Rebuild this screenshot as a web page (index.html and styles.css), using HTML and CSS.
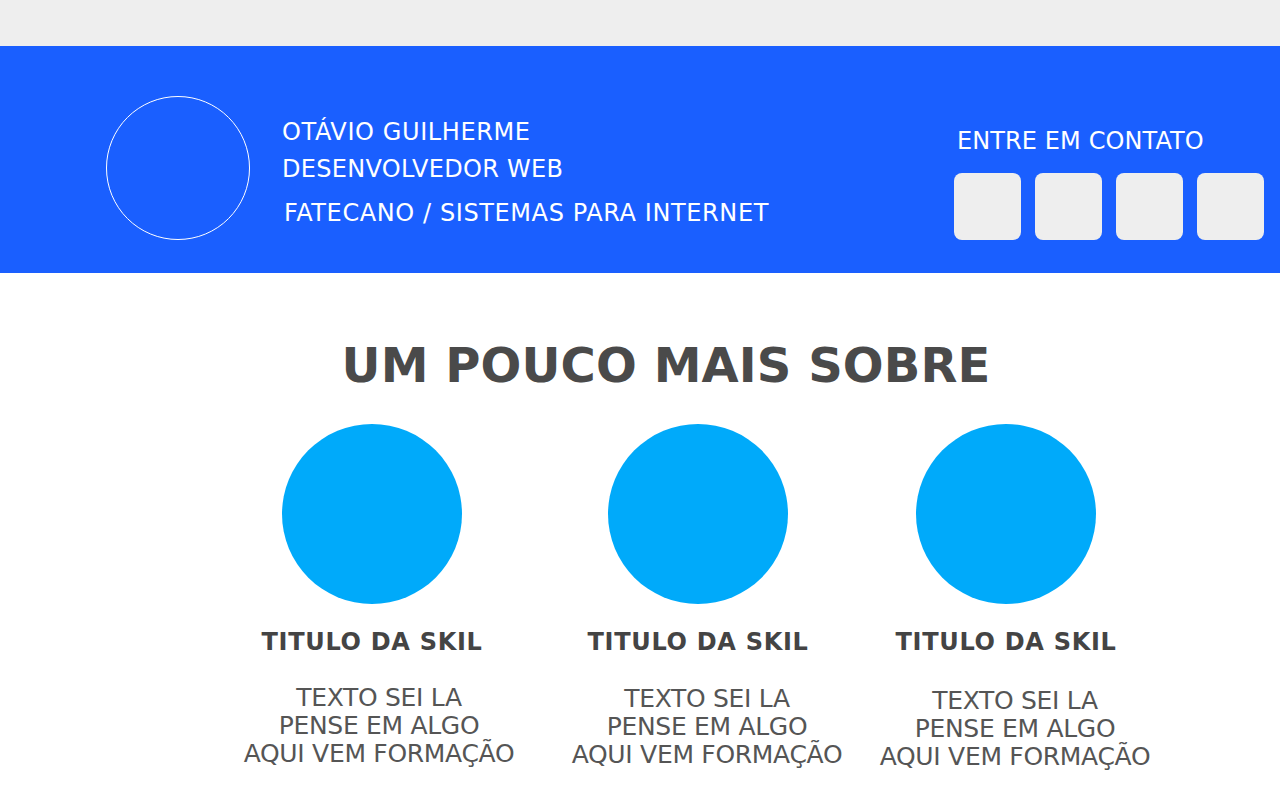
FILE: index.html
```html
<!DOCTYPE html>
<html lang="pt-BR">
<head>
<meta charset="utf-8">
<title>Otávio Guilherme</title>
<link rel="stylesheet" href="styles.css">
</head>
<body>
<div class="topbar"></div>
<header class="hero">
  <div class="avatar"></div>
  <div class="intro">
    <p class="intro-line intro-name">OTÁVIO GUILHERME</p>
    <p class="intro-line">DESENVOLVEDOR WEB</p>
    <p class="intro-line intro-course">FATECANO / SISTEMAS PARA INTERNET</p>
  </div>
  <div class="contact">
    <p class="contact-title">ENTRE EM CONTATO</p>
    <div class="socials">
      <span class="social"></span>
      <span class="social"></span>
      <span class="social"></span>
      <span class="social"></span>
    </div>
  </div>
</header>
<main class="about">
  <h1 class="about-title">UM POUCO MAIS SOBRE</h1>
  <div class="skills">
    <div class="skill skill-1">
      <div class="skill-circle"></div>
      <h2 class="skill-title">TITULO DA SKIL</h2>
      <p class="skill-text">TEXTO SEI LA<br>PENSE EM ALGO<br>AQUI VEM FORMAÇÃO</p>
    </div>
    <div class="skill skill-2">
      <div class="skill-circle"></div>
      <h2 class="skill-title">TITULO DA SKIL</h2>
      <p class="skill-text">TEXTO SEI LA<br>PENSE EM ALGO<br>AQUI VEM FORMAÇÃO</p>
    </div>
    <div class="skill skill-3">
      <div class="skill-circle"></div>
      <h2 class="skill-title">TITULO DA SKIL</h2>
      <p class="skill-text">TEXTO SEI LA<br>PENSE EM ALGO<br>AQUI VEM FORMAÇÃO</p>
    </div>
  </div>
</main>
</body>
</html>
```
FILE: styles.css
```css
* { box-sizing: border-box; }
html, body { margin: 0; padding: 0; }
body {
  font-family: "DejaVu Sans", Verdana, sans-serif;
  background: #ffffff;
  width: 1280px;
  overflow: hidden;
}
p, h1, h2 { margin: 0; }

.topbar {
  height: 46px;
  background: #eeeeee;
}

.hero {
  height: 227px;
  background: #1a5fff;
  display: flex;
  align-items: flex-start;
  color: #ffffff;
  padding-left: 106px;
}
.avatar {
  width: 144px;
  height: 144px;
  margin-top: 50px;
  border: 1px solid #ffffff;
  border-radius: 50%;
  flex-shrink: 0;
}
.intro {
  margin-left: 32px;
  margin-top: 66px;
  font-size: 24px;
  letter-spacing: 0.3px;
}
.intro-line { line-height: 38px; }
.intro-name { letter-spacing: 0.6px; padding-top: 1px; margin-bottom: -1px; }
.intro-course { margin-top: 6px; margin-left: 2px; letter-spacing: 0.6px; }

.contact {
  margin-left: auto;
  margin-top: 78px;
  margin-right: 16px;
}
.contact-title {
  font-size: 24px;
  line-height: 34px;
  margin-left: 3px;
  letter-spacing: 0.1px;
}
.socials {
  display: flex;
  gap: 14px;
  margin-top: 15px;
}
.social {
  width: 67px;
  height: 67px;
  border-radius: 8px;
  background: #eeeeee;
}

.about {
  padding-top: 64px;
}
.about-title {
  text-align: center;
  font-size: 48px;
  font-weight: bold;
  color: #4a4a4a;
  line-height: 56px;
  padding-left: 52px;
  letter-spacing: 0.1px;
}
.skills {
  display: flex;
  margin-top: 31px;
}
.skill {
  width: 300px;
  display: flex;
  flex-direction: column;
  align-items: center;
}
.skill-1 { margin-left: 222px; }
.skill-2 { margin-left: 26px; }
.skill-3 { margin-left: 8px; }
.skill-circle {
  width: 180px;
  height: 180px;
  border-radius: 50%;
  background: #00aafa;
}
.skill-title {
  margin-top: 23px;
  font-size: 24px;
  font-weight: bold;
  color: #444444;
  line-height: 30px;
  letter-spacing: 0.7px;
}
.skill-text {
  margin-top: 27px;
  margin-left: 14px;
  text-align: center;
  font-size: 25px;
  letter-spacing: -0.3px;
  line-height: 28px;
  color: #555555;
}
.skill-2 .skill-text { margin-top: 28px; margin-left: 18px; }
.skill-3 .skill-text { margin-top: 30px; margin-left: 18px; }
```
